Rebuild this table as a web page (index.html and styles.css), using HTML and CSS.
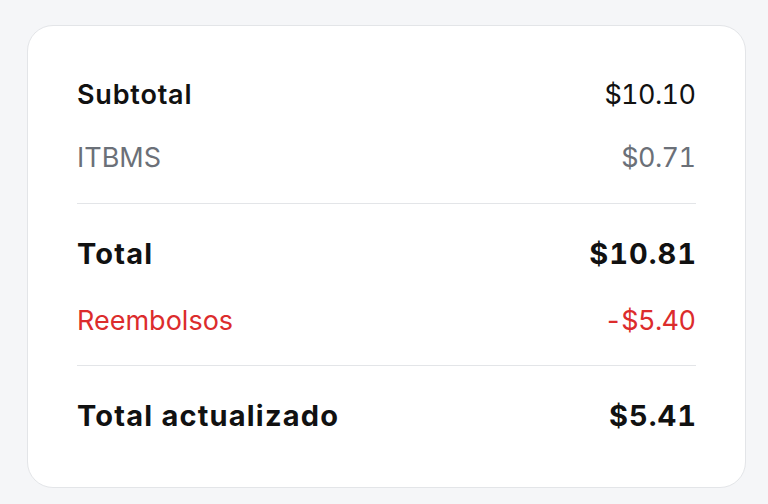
FILE: index.html
```html
<!DOCTYPE html>
<html lang="es">
<head>
  <meta charset="UTF-8">
  <meta name="viewport" content="width=device-width, initial-scale=1.0">
  <title>Resumen</title>
  <link rel="stylesheet" href="styles.css">
</head>
<body>
  <div class="card">
    <div class="group">
      <div class="row strong">
        <span class="label">Subtotal</span>
        <span class="amount">$10.10</span>
      </div>
      <div class="row muted">
        <span>ITBMS</span>
        <span class="amount">$0.71</span>
      </div>
    </div>

    <div class="group wide">
      <div class="row total">
        <span class="label">Total</span>
        <span class="amount">$10.81</span>
      </div>
      <div class="row refund">
        <span>Reembolsos</span>
        <span class="amount">-$5.40</span>
      </div>
    </div>

    <div class="group last">
      <div class="row total">
        <span class="label">Total actualizado</span>
        <span class="amount">$5.41</span>
      </div>
    </div>
  </div>
</body>
</html>
```

FILE: styles.css
```css
* { box-sizing: border-box; }
body {
  margin: 0;
  font-family: Inter, 'Noto Sans', sans-serif;
  background: #f5f6f8;
  color: #111;
  padding: 25px 22px 0 27px;
}
.card {
  width: 719px;
  background: #fff;
  border: 1px solid #e3e5e8;
  border-radius: 26px;
  padding: 53px 49px;
}
.group {
  display: flex;
  flex-direction: column;
  gap: 31px;
  padding-bottom: 29px;
  border-bottom: 1px solid #e3e5e8;
  margin-bottom: 32px;
}
.group.wide { gap: 33px; padding-bottom: 28px; }
.group.last {
  padding-bottom: 0;
  border-bottom: none;
  margin-bottom: 0;
}
.row {
  display: flex;
  justify-content: space-between;
  align-items: center;
  font-size: 27px;
  line-height: 32px;
}
.amount {
  font-variant-numeric: tabular-nums;
  letter-spacing: -0.6px;
  margin-right: 0.6px;
}
.strong .label {
  font-weight: 600;
  letter-spacing: 0.8px;
}
.muted { color: #6b7078; }
.total {
  font-size: 29px;
  font-weight: 700;
  line-height: 36px;
}
.total .label { letter-spacing: 1.2px; }
.total .amount { letter-spacing: 1px; margin-right: -1px; }
.refund { color: #dc2c2c; }
```
